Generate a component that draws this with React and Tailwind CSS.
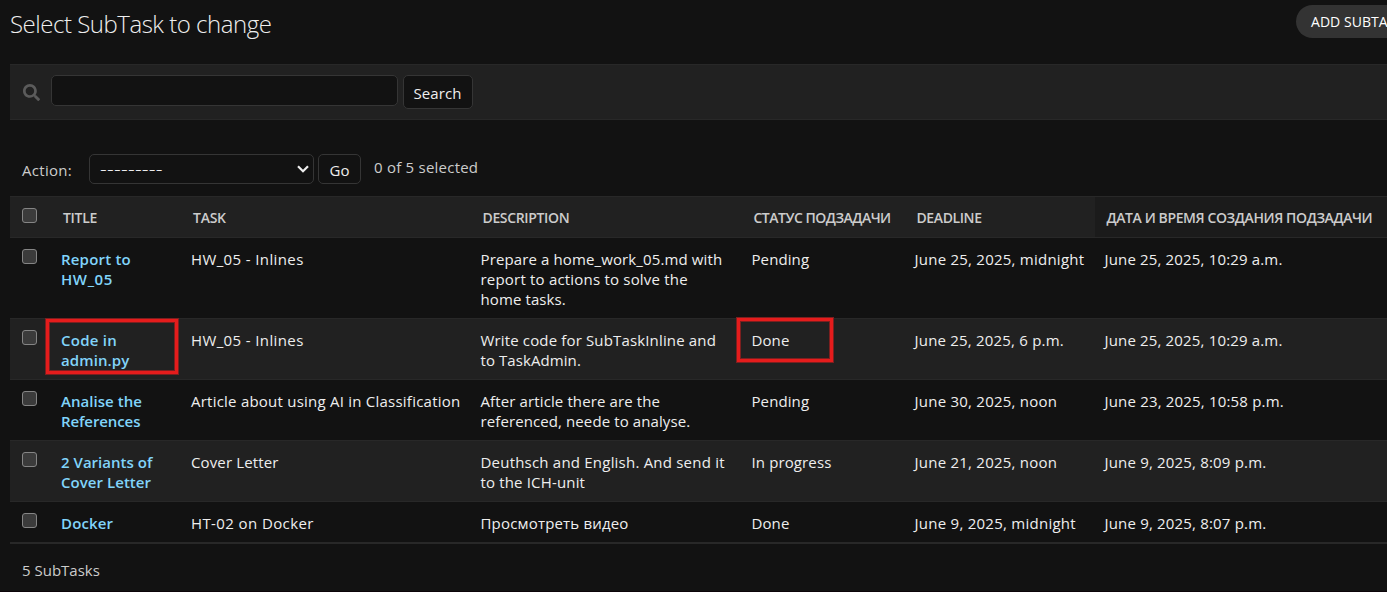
import { FaSearch } from "react-icons/fa";

const COLS = "grid grid-cols-[41px_130px_289.5px_271px_162.5px_190.5px_1fr]";

const rows = [
  {
    h: "h-[81px]",
    bg: "bg-[#121212]",
    title: [["Report to", "tracking-[0.2px]"], ["HW_05", "tracking-[0.6px]"]],
    task: ["HW_05 - Inlines", "tracking-[0.38px]"],
    desc: [
      ["Prepare a home_work_05.md with", "tracking-[0.12px]"],
      ["report to actions to solve the", "tracking-[0.2px]"],
      ["home tasks.", "tracking-[0.1px]"],
    ],
    status: ["Pending", "tracking-[0.1px]"],
    deadline: ["June 25, 2025, midnight", "tracking-[0.24px]"],
    created: ["June 25, 2025, 10:29 a.m.", "tracking-[0.16px]"],
  },
  {
    h: "h-[61px]",
    bg: "bg-[#212121]",
    title: [["Code in", "tracking-[0.25px]"], ["admin.py", "tracking-[0.1px]"]],
    task: ["HW_05 - Inlines", "tracking-[0.38px]"],
    desc: [
      ["Write code for SubTaskInline and", "tracking-[0.15px]"],
      ["to TaskAdmin.", "tracking-[0.08px]"],
    ],
    status: ["Done", "tracking-[0.1px]"],
    deadline: ["June 25, 2025, 6 p.m.", "tracking-[0.2px]"],
    created: ["June 25, 2025, 10:29 a.m.", "tracking-[0.16px]"],
    marked: true,
  },
  {
    h: "h-[61px]",
    bg: "bg-[#121212]",
    title: [["Analise the", "tracking-[0.05px]"], ["References", "tracking-[-0.1px]"]],
    task: ["Article about using AI in Classification", "tracking-[0.23px]"],
    desc: [
      ["After article there are the", "tracking-[0.12px]"],
      ["referenced, neede to analyse.", "tracking-[0.1px]"],
    ],
    status: ["Pending", "tracking-[0.1px]"],
    deadline: ["June 30, 2025, noon", "tracking-[0.24px]"],
    created: ["June 23, 2025, 10:58 p.m.", "tracking-[0.18px]"],
  },
  {
    h: "h-[61px]",
    bg: "bg-[#212121]",
    title: [["2 Variants of", "tracking-[0.02px]"], ["Cover Letter", "tracking-[0.05px]"]],
    task: ["Cover Letter", "tracking-[0.13px]"],
    desc: [
      ["Deuthsch and English. And send it", "tracking-[0.21px]"],
      ["to the ICH-unit", "tracking-[0.16px]"],
    ],
    status: ["In progress", "tracking-[0.12px]"],
    deadline: ["June 21, 2025, noon", "tracking-[0.24px]"],
    created: ["June 9, 2025, 8:09 p.m.", "tracking-[0.18px]"],
  },
  {
    h: "h-[41px]",
    bg: "bg-[#121212]",
    title: [["Docker", "tracking-[0.15px]"]],
    task: ["HT-02 on Docker", "tracking-[0.4px]"],
    desc: [["Просмотреть видео", "tracking-[0.18px]"]],
    status: ["Done", "tracking-[0.1px]"],
    deadline: ["June 9, 2025, midnight", "tracking-[0.26px]"],
    created: ["June 9, 2025, 8:07 p.m.", "tracking-[0.18px]"],
  },
];

function Checkbox() {
  return <div className="ml-3 mt-[11px] size-[15px] rounded-[3px] border border-[#858585] bg-[#3b3b3b]" />;
}

function Cell({ lines, className = "" }) {
  return (
    <div className={`px-2.5 pt-[11px] ${className}`}>
      {lines.map(([text, tracking]) => <div key={text} className={tracking}>{text}</div>)}
    </div>
  );
}

const MARK = "absolute border-[3px] border-[#e51c1c] shadow-[0_0_0_1px_#7c1f1f,inset_0_0_0_1px_#7c1f1f]";

function Row({ row }) {
  return (
    <div className={`${COLS} ${row.h} ${row.bg} relative border-t border-[#282828] text-[15px] leading-5 whitespace-nowrap text-[#eeeeee]`}>
      <Checkbox />
      <Cell lines={row.title} className="font-semibold text-[#81d4fa]" />
      <Cell lines={[row.task]} />
      <Cell lines={row.desc} />
      <Cell lines={[row.status]} />
      <Cell lines={[row.deadline]} className="pl-[10.5px]" />
      <Cell lines={[row.created]} />
      {row.marked && (
        <>
          <div className={`${MARK} left-[36px] top-0 h-[55px] w-[132px]`} />
          <div className={`${MARK} left-[727px] -top-px h-[44px] w-[96px]`} />
        </>
      )}
    </div>
  );
}

export default function App() {
  return (
    <div className="h-[592px] w-[1387px] overflow-hidden border-b border-[#0c0409] bg-[#121212] font-['Open_Sans','Noto_Sans',sans-serif] text-[#eeeeee]">
      <div className="flex h-16 justify-between pl-2.5">
        <h1 className="pt-[8px] text-[24px] leading-8 font-light tracking-[-0.48px] whitespace-nowrap">Select SubTask to change</h1>
        <div className="mt-[5px] h-[33px] w-[91px] overflow-hidden rounded-l-full bg-[#333333] pl-[15px] text-[14px] leading-[34px] tracking-[0.05px] whitespace-nowrap text-white">ADD SUBTASK</div>
      </div>

      <div className="ml-2.5 flex h-14 items-start border-y border-[#282828] bg-[#212121]">
        <FaSearch className="ml-[13px] mt-[19px] size-[17px] text-[#5b5b5b]" />
        <div className="ml-[11px] mt-[10px] h-[31px] w-[347px] rounded-[5px] border border-[#353535] bg-[#121212]" />
        <div className="ml-[5px] mt-[10px] h-[34px] w-[70px] rounded-[5px] border border-[#353535] bg-[#121212] pl-[9.5px] text-[15px] leading-[35px] tracking-[0.1px]">Search</div>
      </div>

      <div className="flex h-[76px] items-start pl-[22px] pt-[34px] text-[15px]">
        <div className="w-[67px] pt-[6px] leading-5 tracking-[0.3px] text-[#cccccc]">Action:</div>
        <div className="flex h-[30px] w-[225px] items-center justify-between rounded-[5px] border border-[#353535] pl-2.5 pr-1">
          <span className="pb-[2px] text-[21px] leading-none font-light tracking-[0.22px]">---------</span>
          <svg width="12" height="8" viewBox="0 0 12 8" fill="none" stroke="#eeeeee" strokeWidth="2.2"><path d="M1 1.2 6 6.2 11 1.2" /></svg>
        </div>
        <div className="ml-1 h-[30px] w-[43px] rounded-[5px] border border-[#353535] text-center leading-[31px]">Go</div>
        <div className="ml-[13px] pt-[3px] leading-5 tracking-[0.23px] text-[#cccccc]">0 of 5 selected</div>
      </div>

      <div className="ml-2.5 border-b-2 border-[#282828]">
        <div className={`${COLS} h-[41px] border-t border-[#282828] bg-[#212121] text-[14px] leading-[41px] font-semibold whitespace-nowrap text-[#cccccc]`}>
          <Checkbox />
          <div className="pl-3 tracking-[-0.3px]">TITLE</div>
          <div className="pl-3 tracking-[-0.25px]">TASK</div>
          <div className="pl-3 tracking-[-0.35px]">DESCRIPTION</div>
          <div className="pl-3 tracking-[-0.5px]">СТАТУС ПОДЗАДАЧИ</div>
          <div className="pl-[12.5px] tracking-[-0.4px]">DEADLINE</div>
          <div className="bg-[#1b1b1b] pl-3 tracking-[-0.4px]">ДАТА И ВРЕМЯ СОЗДАНИЯ ПОДЗАДАЧИ</div>
        </div>
        {rows.map((row) => <Row key={row.title[0][0]} row={row} />)}
      </div>
      <div className="pl-[22px] pt-[16px] text-[15px] leading-5 text-[#cccccc]">5 SubTasks</div>
    </div>
  );
}
